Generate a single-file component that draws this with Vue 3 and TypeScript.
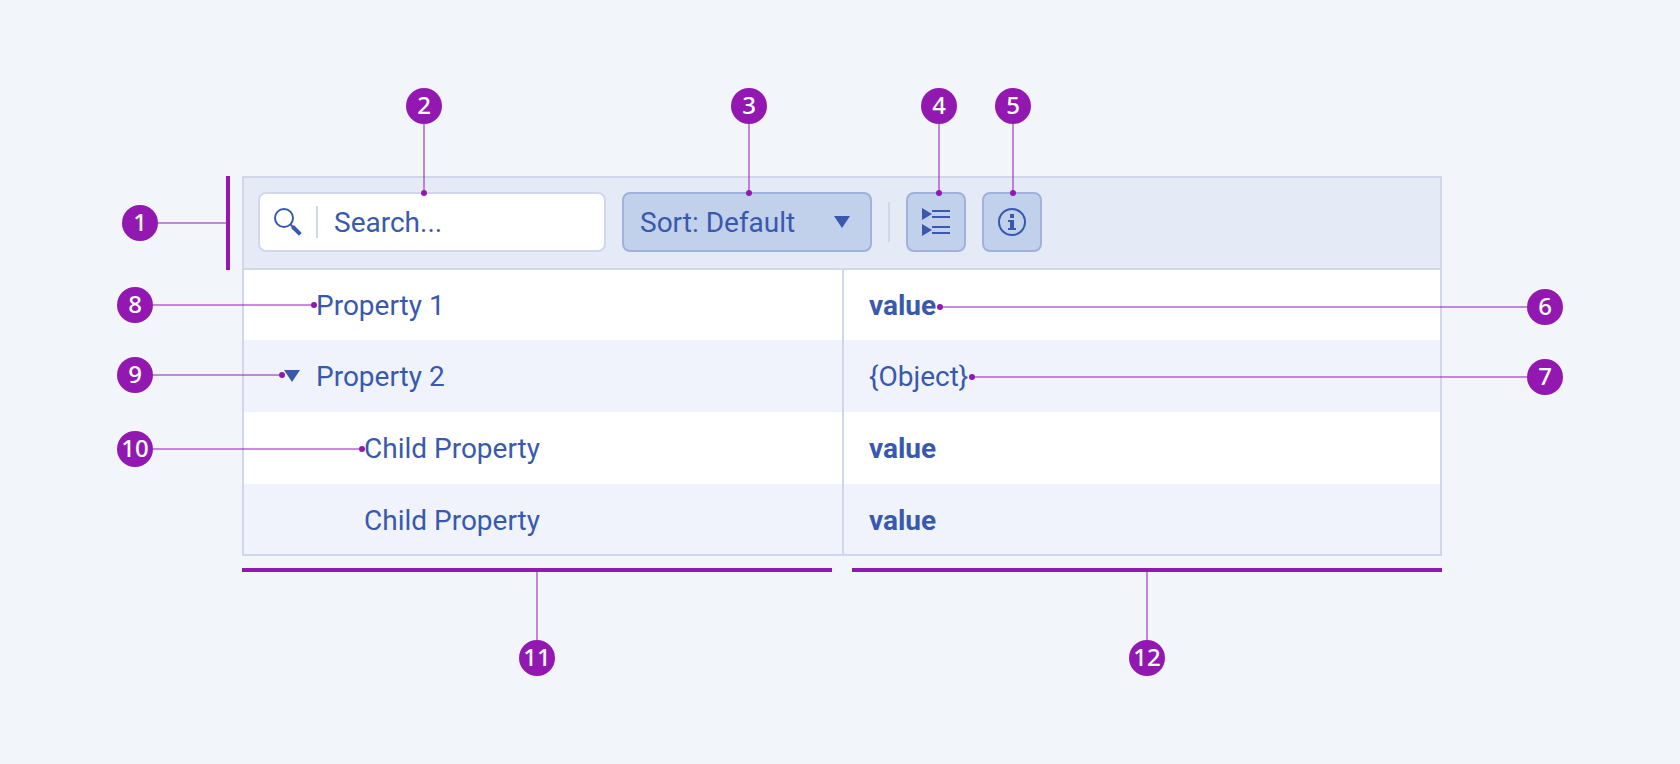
<script setup lang="ts">
import { ref, type CSSProperties } from 'vue'

interface Row {
  name: string
  value: string
  level: number
  expandable?: boolean
  strong?: boolean
}

interface Callout {
  id: number
  side: 'top' | 'left' | 'right'
  dot: boolean
  place: CSSProperties
}

const query = ref('')
const sort = ref('default')

const rows: Row[] = [
  { name: 'Property 1', value: 'value', level: 0, strong: true },
  { name: 'Property 2', value: '{Object}', level: 0, expandable: true },
  { name: 'Child Property', value: 'value', level: 1, strong: true },
  { name: 'Child Property', value: 'value', level: 1, strong: true },
]

const above = (id: number, left: number): Callout => ({
  id, side: 'top', dot: true, place: { left: `${left}px`, top: '-88px', height: '108px' },
})
const before = (id: number, top: number, left: number, width: number, dot = true): Callout => ({
  id, side: 'left', dot, place: { top: `${top}px`, left: `${left}px`, width: `${width}px` },
})
const after = (id: number, top: number, offset: number): Callout => ({
  id, side: 'right', dot: true, place: { top: `${top}px`, left: `calc(50% + ${offset}px)`, right: '-121px' },
})

const callouts: Callout[] = [
  before(1, 29, -120, 104, false),
  above(2, 164),
  above(3, 489),
  above(4, 679),
  above(5, 753),
  after(6, 113, 95),
  after(7, 183, 127),
  before(8, 111, -125, 200),
  before(9, 181, -125, 168),
  before(10, 255, -125, 248),
]
</script>

<template>
  <main class="page">
    <div class="diagram">
      <section class="panel">
        <div class="toolbar">
          <label class="search">
            <svg class="icon" viewBox="0 0 28 28" aria-hidden="true">
              <circle cx="10" cy="10" r="9" fill="none" stroke="currentColor" stroke-width="2" />
              <path d="M16.5 16.5 20 20" stroke="currentColor" stroke-width="2" />
              <path d="M18.5 18.5 26.3 26.3" stroke="currentColor" stroke-width="4" />
            </svg>
            <span class="search-rule"></span>
            <input v-model="query" type="text" placeholder="Search..." aria-label="Search" />
          </label>
          <div class="sort">
            <select v-model="sort" aria-label="Sort">
              <option value="default">Sort: Default</option>
            </select>
            <svg class="arrow" viewBox="0 0 16 12" aria-hidden="true"><path d="M0 0H16L8 12Z" fill="currentColor" /></svg>
          </div>
          <span class="separator"></span>
          <button class="tool" type="button" aria-label="Expand all">
            <svg class="icon" viewBox="0 0 28 28" aria-hidden="true">
              <path d="M0 0 10 6 0 12ZM0 16 10 22 0 28ZM10 2H28V4H10ZM10 8H28V10H10ZM10 18H28V20H10ZM10 24H28V26H10Z" fill="currentColor" />
            </svg>
          </button>
          <button class="tool" type="button" aria-label="Information">
            <svg class="icon" viewBox="0 0 28 28" aria-hidden="true">
              <circle cx="14" cy="14" r="13" fill="none" stroke="currentColor" stroke-width="2" />
              <path d="M12 6H16V10H12ZM10 12H16V20H18V22H10V20H12V14H10Z" fill="currentColor" />
            </svg>
          </button>
        </div>
        <table class="grid">
          <tbody>
            <tr v-for="(row, i) in rows" :key="i">
              <th scope="row">
                <div class="name" :class="{ child: row.level > 0 }">
                  <span class="slot">
                    <button v-if="row.expandable" class="toggle" type="button" aria-label="Collapse Property 2">
                      <svg class="arrow" viewBox="0 0 16 12" aria-hidden="true"><path d="M0 0H16L8 12Z" fill="currentColor" /></svg>
                    </button>
                  </span>
                  {{ row.name }}
                </div>
              </th>
              <td :class="{ strong: row.strong }">{{ row.value }}</td>
            </tr>
          </tbody>
        </table>
      </section>

      <div class="spans">
        <div v-for="n in [11, 12]" :key="n" class="span">
          <span class="bar"></span>
          <span class="stem"></span>
          <span class="badge">{{ n }}</span>
        </div>
      </div>

      <span class="toolbar-bar"></span>
      <div v-for="c in callouts" :key="c.id" class="callout" :class="c.side" :style="c.place">
        <span class="badge">{{ c.id }}</span>
        <span class="stem"></span>
        <span v-if="c.dot" class="dot"></span>
      </div>
    </div>
  </main>
</template>

<style>
body {
  background: #f2f6fb;
}
</style>

<style scoped>
.page {
  box-sizing: border-box;
  min-height: 100vh;
  padding: 176px 238px 88px 242px;
  background: #f2f6fb;
  color: #3859ae;
  font-family: Roboto, "Liberation Sans", sans-serif;
  font-size: 28px;
  line-height: 32px;
}
.page * {
  box-sizing: border-box;
}
.diagram {
  position: relative;
}
.panel {
  border: 2px solid #d0d7eb;
  background: #fff;
}
.toolbar {
  display: flex;
  align-items: center;
  gap: 16px;
  padding: 14px 14px 16px;
  border-bottom: 2px solid #d0d7eb;
  background: #e4eaf6;
}
.icon {
  display: block;
  flex: none;
  width: 28px;
  height: 28px;
}
.arrow {
  display: block;
  width: 16px;
  height: 12px;
}
.search {
  display: flex;
  align-items: center;
  width: 348px;
  height: 60px;
  padding: 0 14px;
  border: 2px solid #d0d7eb;
  border-radius: 8px;
  background: #fff;
}
.search-rule {
  flex: none;
  width: 2px;
  height: 32px;
  margin: 0 16px 0 14px;
  background: #d0d7eb;
}
.search input {
  flex: 1;
  min-width: 0;
  padding: 2px 0 0;
  border: 0;
  outline: 0;
  background: none;
  color: inherit;
  font: inherit;
}
.search input::placeholder {
  color: inherit;
  opacity: 1;
}
.sort {
  position: relative;
  width: 250px;
}
.sort select {
  display: block;
  width: 100%;
  height: 60px;
  padding: 2px 48px 0 16px;
  appearance: none;
  border: 2px solid #a0b1dc;
  border-radius: 8px;
  background: #c1d0eb;
  color: inherit;
  font: inherit;
}
.sort .arrow {
  position: absolute;
  top: 24px;
  right: 22px;
  pointer-events: none;
}
.separator {
  width: 2px;
  height: 40px;
  background: #d0d7eb;
}
.tool {
  display: flex;
  align-items: center;
  justify-content: center;
  width: 60px;
  height: 60px;
  padding: 0;
  border: 2px solid #a0b1dc;
  border-radius: 8px;
  background: #c1d0eb;
  color: inherit;
}
.grid {
  width: 100%;
  border-collapse: separate;
  border-spacing: 0;
  table-layout: fixed;
}
.grid tr {
  height: 72px;
}
.grid tr:first-child,
.grid tr:last-child {
  height: 70px;
}
.grid tr:nth-child(even) {
  background: #f0f3fc;
}
.grid th,
.grid td {
  padding: 2px 0 0;
  font-weight: 400;
  text-align: left;
  vertical-align: middle;
}
.grid tr:last-child > * {
  padding-top: 4px;
}
.grid th {
  width: 50%;
}
.grid td {
  padding-left: 25px;
  border-left: 2px solid #d0d7eb;
}
.grid td.strong {
  font-weight: 700;
}
.name {
  display: flex;
  align-items: center;
  gap: 16px;
  padding-left: 40px;
}
.name.child {
  padding-left: 88px;
}
.slot {
  width: 16px;
}
.toggle {
  display: block;
  padding: 0 0 2px;
  border: 0;
  background: none;
  color: inherit;
}
.badge {
  flex: none;
  width: 36px;
  height: 36px;
  border-radius: 50%;
  background: #9218b1;
  color: #fff;
  font: 500 24px/34px "Noto Sans", "Open Sans", sans-serif;
  text-align: center;
}
.stem {
  background: #9218b1;
  opacity: 0.5;
}
.dot {
  flex: none;
  width: 6px;
  height: 6px;
  border-radius: 50%;
  background: #9218b1;
}
.spans {
  display: grid;
  grid-template-columns: 1fr 1fr;
  gap: 20px;
  margin-top: 12px;
}
.span {
  display: flex;
  flex-direction: column;
  align-items: center;
}
.span .bar {
  width: 100%;
  height: 4px;
  background: #9218b1;
}
.span .stem {
  width: 2px;
  height: 68px;
}
.toolbar-bar {
  position: absolute;
  top: 0;
  left: -16px;
  width: 4px;
  height: 94px;
  background: #9218b1;
}
.callout {
  position: absolute;
  display: flex;
  align-items: center;
  pointer-events: none;
}
.callout .stem {
  flex: 1;
}
.callout.top {
  flex-direction: column;
}
.callout.top .stem {
  width: 2px;
}
.callout.left .stem,
.callout.right .stem {
  height: 2px;
}
.callout.right {
  flex-direction: row-reverse;
}
</style>
